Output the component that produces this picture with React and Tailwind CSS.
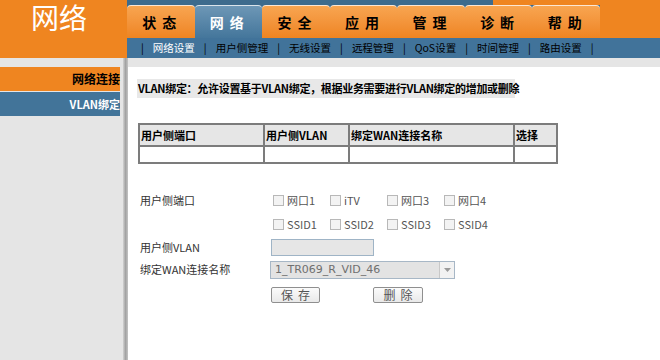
const tabs = ["状态", "网络", "安全", "应用", "管理", "诊断", "帮助"];
const subs = ["网络设置", "用户侧管理", "无线设置", "远程管理", "QoS设置", "时间管理", "路由设置"];
const ports = ["网口1", "iTV", "网口3", "网口4"];
const ssids = ["SSID1", "SSID2", "SSID3", "SSID4"];

function Check({ label }) {
  return (
    <label className="w-[57px] flex items-center gap-[3px] text-[11px] text-[#555]">
      <span className="w-[11px] h-[11px] border border-[#b8b8b8] bg-[#f3f3f3]" />
      {label}
    </label>
  );
}

export default function App() {
  return (
    <div className="w-[660px] h-[360px] overflow-hidden flex flex-col bg-[#e5e5e5] font-[Noto_Sans_CJK_SC,sans-serif]">
      {/* header */}
      <header className="flex h-[58px] shrink-0">
        <div className="w-[127px] bg-[#ef8520] text-white text-[28px] leading-[34px] pl-[31px]">网络</div>
        <div className="flex-1 flex flex-col">
          <div className="flex h-[38px]">
            <div className="w-[473px] flex flex-col">
              <div className="h-[5px] flex">
                <div className="w-[366px] bg-[#3d6b8d]" />
                <div className="flex-1 bg-[#ef8520]" />
              </div>
              <div className="flex-1 grid grid-cols-7 bg-[#3d6b8d]">
                {tabs.map((t, i) => (
                  <div
                    key={t}
                    className={`flex items-center justify-center rounded-t-[4px] border-t border-white/80 text-[14px] font-bold tracking-[6px] pl-[3px] ${
                      i === 1
                        ? "bg-gradient-to-b from-[#6d97b6] to-[#44769b] text-white"
                        : "bg-gradient-to-b from-[#f8a550] to-[#ee8420] text-black"
                    }`}
                  >
                    {t}
                  </div>
                ))}
              </div>
            </div>
            <div className="flex-1 bg-[#ef8520]" />
          </div>
          <nav className="h-[20px] bg-[#41739a] flex items-center gap-[9px] pl-[14px] text-[10.5px] leading-none">
            {subs.map((s, i) => (
              <div key={s} className="flex items-center gap-[9px]">
                <span className="text-black">|</span>
                <span className={i === 0 ? "text-white" : "text-black"}>{s}</span>
              </div>
            ))}
            <span className="text-black">|</span>
          </nav>
        </div>
      </header>

      <div className="flex flex-1">
        {/* sidebar */}
        <aside className="w-[123px] pt-[9px] flex flex-col gap-[1px]">
          <div className="w-[120px] h-[24px] bg-[#ef8520] flex items-center justify-end text-[12px] font-bold text-black">网络连接</div>
          <div className="w-[120px] h-[24px] bg-[#427499] flex items-center justify-end text-[11px] font-bold text-white">VLAN绑定</div>
        </aside>
        <div className="w-[5px] bg-gradient-to-r from-[#d2d2d2] via-[#a3a3a3] to-[#c4c4c4]" />

        {/* main */}
        <main className="flex-1 bg-white mt-[9px] pl-[9px] pt-[12px]">
          <div className="w-[378px] h-[19px] bg-[#e8e8e8] flex items-center pl-[1px] text-[11px] font-bold text-black whitespace-nowrap tracking-[-0.3px]">
            VLAN绑定：允许设置基于VLAN绑定，根据业务需要进行VLAN绑定的增加或删除
          </div>

          <table className="mt-[25px] ml-[1px] w-[420px] border-collapse text-[11px] font-bold text-black">
            <tbody>
              <tr className="h-[22px] bg-[#e6e6e6]">
                <td className="w-[125px] border-2 border-[#7c7c7c] pl-[1px]">用户侧端口</td>
                <td className="w-[85px] border-2 border-[#7c7c7c] pl-[1px]">用户侧VLAN</td>
                <td className="w-[165px] border-2 border-[#7c7c7c] pl-[1px]">绑定WAN连接名称</td>
                <td className="border-2 border-[#7c7c7c] pl-[1px]">选择</td>
              </tr>
              <tr className="h-[17px]">
                <td className="border-2 border-[#7c7c7c]" />
                <td className="border-2 border-[#7c7c7c]" />
                <td className="border-2 border-[#7c7c7c]" />
                <td className="border-2 border-[#7c7c7c]" />
              </tr>
            </tbody>
          </table>

          <div className="mt-[24px] pl-[3px] text-[11px] text-[#333]">
            <div className="flex items-center h-[24px]">
              <div className="w-[133px]">用户侧端口</div>
              <div className="flex">
                {ports.map((p) => (
                  <Check key={p} label={p} />
                ))}
              </div>
            </div>
            <div className="flex items-center h-[24px]">
              <div className="w-[133px]" />
              <div className="flex">
                {ssids.map((p) => (
                  <Check key={p} label={p} />
                ))}
              </div>
            </div>
            <div className="flex items-center h-[22px]">
              <div className="w-[131px]">用户侧VLAN</div>
              <div className="w-[103px] h-[17px] bg-[#e6e6e6] border border-[#9fb4c6]" />
            </div>
            <div className="flex items-center h-[23px]">
              <div className="w-[130px]">绑定WAN连接名称</div>
              <div className="w-[185px] h-[18px] bg-[#e3e3e3] border border-[#a7b7c6] flex items-center">
                <span className="flex-1 pl-[4px] text-[11px] text-[#6f6f6f] font-[DejaVu_Sans,sans-serif] leading-none">1_TR069_R_VID_46</span>
                <span className="w-[15px] h-full border-l border-[#c8c8c8] bg-[#f2f2f2] flex items-center justify-center">
                  <svg width="7" height="4" viewBox="0 0 7 4">
                    <path d="M0 0h7L3.5 4z" fill="#9a9a9a" />
                  </svg>
                </span>
              </div>
            </div>
            <div className="flex items-center h-[24px] pt-[3px]">
              <div className="w-[131px]" />
              <button className="w-[49px] h-[16px] border border-[#8f8f8f] bg-gradient-to-b from-[#fbfbfb] to-[#e9e9e9] text-[12px] text-[#555] leading-none tracking-[5px] pl-[5px] rounded-[2px]">
                保存
              </button>
              <button className="ml-[53px] w-[50px] h-[16px] border border-[#8f8f8f] bg-gradient-to-b from-[#fbfbfb] to-[#e9e9e9] text-[12px] text-[#555] leading-none tracking-[5px] pl-[5px] rounded-[2px]">
                删除
              </button>
            </div>
          </div>
        </main>
      </div>
    </div>
  );
}
